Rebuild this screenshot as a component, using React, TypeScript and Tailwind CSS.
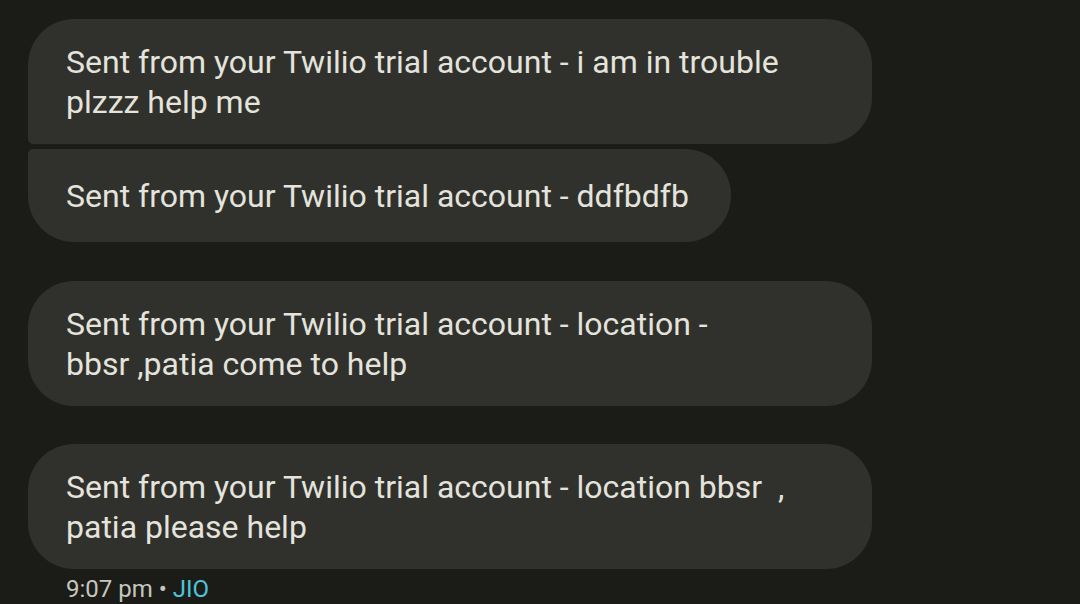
import React from "react";

const font = { fontFamily: "Roboto, 'Open Sans', sans-serif" };

export default function App() {
  return (
    <div className="w-[1080px] h-[604px] bg-[#1b1c18] overflow-hidden pt-[19px] pl-[28px]" style={font}>
      <div className="flex flex-col items-start">
        <div className="w-[844px] bg-[#30312d] rounded-[46px] rounded-bl-[5px] pl-[38px] pr-[38px] pt-[23px] pb-[22px] text-[32px] leading-[40px] text-[#e4e3dc]">
          Sent from your Twilio trial account - i am in trouble<br />plzzz help me
        </div>
        <div className="mt-[5px] h-[93px] flex items-center bg-[#30312d] rounded-[46px] rounded-tl-[5px] pl-[38px] pr-[42px] pt-[1px] text-[32px] leading-[40px] text-[#e4e3dc]">
          Sent from your Twilio trial account - ddfbdfb
        </div>
        <div className="mt-[39px] w-[844px] bg-[#30312d] rounded-[46px] pl-[38px] pr-[38px] pt-[23px] pb-[22px] text-[32px] leading-[40px] text-[#e4e3dc]">
          Sent from your Twilio trial account - location -<br />bbsr ,patia come to help
        </div>
        <div className="mt-[38px] w-[844px] bg-[#30312d] rounded-[46px] pl-[38px] pr-[38px] pt-[23px] pb-[22px] text-[32px] leading-[40px] text-[#e4e3dc]">
          Sent from your Twilio trial account - location bbsr&nbsp; ,<br />patia please help
        </div>
        <div className="mt-[5px] pl-[38px] text-[24px] leading-[30px] text-[#c6c7be]">
          9:07 pm <span className="text-[#c6c7be]">•</span> <span className="text-[#4fc3d9]">JIO</span>
        </div>
      </div>
    </div>
  );
}
